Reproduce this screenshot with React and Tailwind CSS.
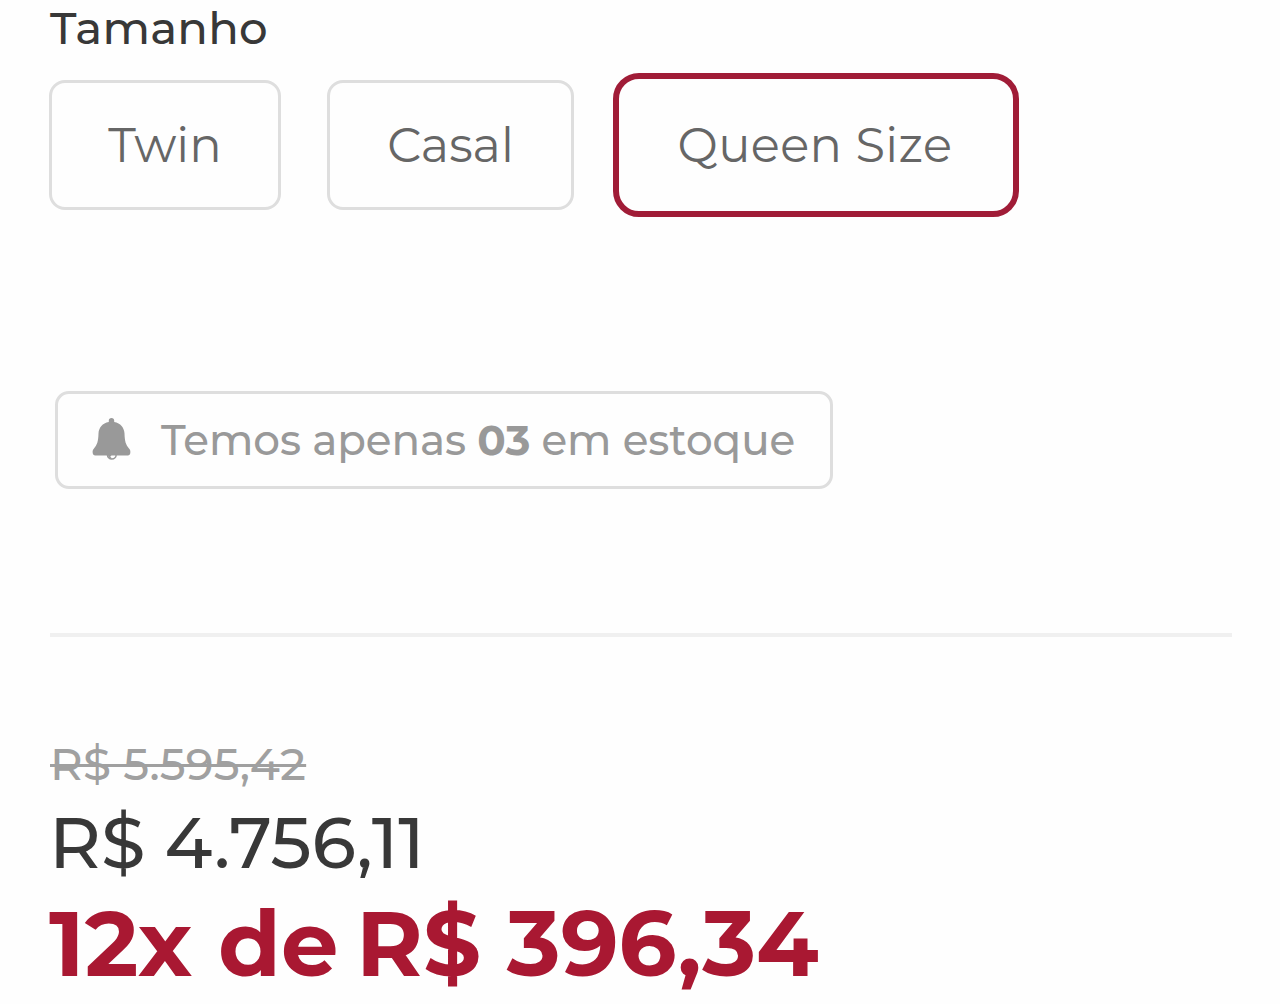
const sizes = [
    { label: "Twin", box: "w-[232px] h-[130px] rounded-2xl border-3 border-[#dedede]" },
    { label: "Casal", box: "w-[247px] h-[130px] ml-[46px] rounded-2xl border-3 border-[#dedede]" },
    { label: "Queen Size", box: "w-[406px] h-[144px] ml-[39px] rounded-[26px] border-6 border-[#a01c37] pr-0.5 tracking-[0.4px]" },
];

const BellIcon = () => (
    <svg className="h-11 w-10" viewBox="0 0 40 44" fill="currentColor">
        <path d="M19.5 0C17.8 0 16.8 1 16.8 2.4V4C10.5 5.2 6.8 9.6 6.5 15.5C6.2 23 5.5 26.5 1.6 31C.7 32 .5 33 .7 35C.9 36.6 1.7 37.4 3.2 37.4H35.8C37.3 37.4 38.1 36.6 38.3 35C38.5 33 38.3 32 37.4 31C33.5 26.5 32.800 23 32.5 15.5C32.2 9.6 28.5 5.2 22.2 4V2.4C22.2 1 21.2 0 19.5 0Z" />
        <path d="M15.4 36.5C15.4 39 17.3 41 19.8 41S24.2 39 24.2 36.5" fill="none" stroke="currentColor" strokeWidth="1.5" />
        <path d="M16 37C16 39.5 18 41 20 40.4L18.3 38.8L19.5 37Z" />
    </svg>
);

const App = () => {
    return (
        <div className="h-[1004px] w-[1280px] overflow-hidden bg-[#fefefe] pl-[50px] pr-12 font-['Montserrat','Inter',sans-serif] text-[#383838]">
            <h2 className="h-[73px] text-[45px] leading-[56px] font-medium tracking-[0.2px]">Tamanho</h2>
            <div className="-ml-px flex h-36 items-center">
                {sizes.map((size) => (
                    <button key={size.label} className={`flex items-center justify-center text-5xl text-[#666] ${size.box}`}>
                        {size.label}
                    </button>
                ))}
            </div>
            <div className="mt-[174px] ml-[5px] flex h-[98px] w-[778px] items-center rounded-[14px] border-3 border-[#dedede] pl-[34px] text-[#999]">
                <BellIcon />
                <p className="ml-[29px] text-[42px] font-medium tracking-[-0.05px] whitespace-nowrap">
                    Temos apenas <b>03</b> em estoque
                </p>
            </div>
            <hr className="mt-[144px] border-t-4 border-[#f0f0f0]" />
            <div className="pt-[102px]">
                <p className="text-[45px] leading-[50px] font-medium tracking-[0.2px] text-[#a0a0a0]">
                    <span className="line-through decoration-3">R$ 5.595,42</span>
                </p>
                <p className="mt-2 -ml-px text-[71.5px] leading-[91px] font-medium">R$ 4.756,11</p>
                <p className="mt-[5px] -ml-px text-[91px] leading-[101px] font-bold whitespace-nowrap text-[#a91832]">
                    12x de <span className="-ml-2">R$ 396,34</span>
                </p>
            </div>
        </div>
    );
};

export default App;
